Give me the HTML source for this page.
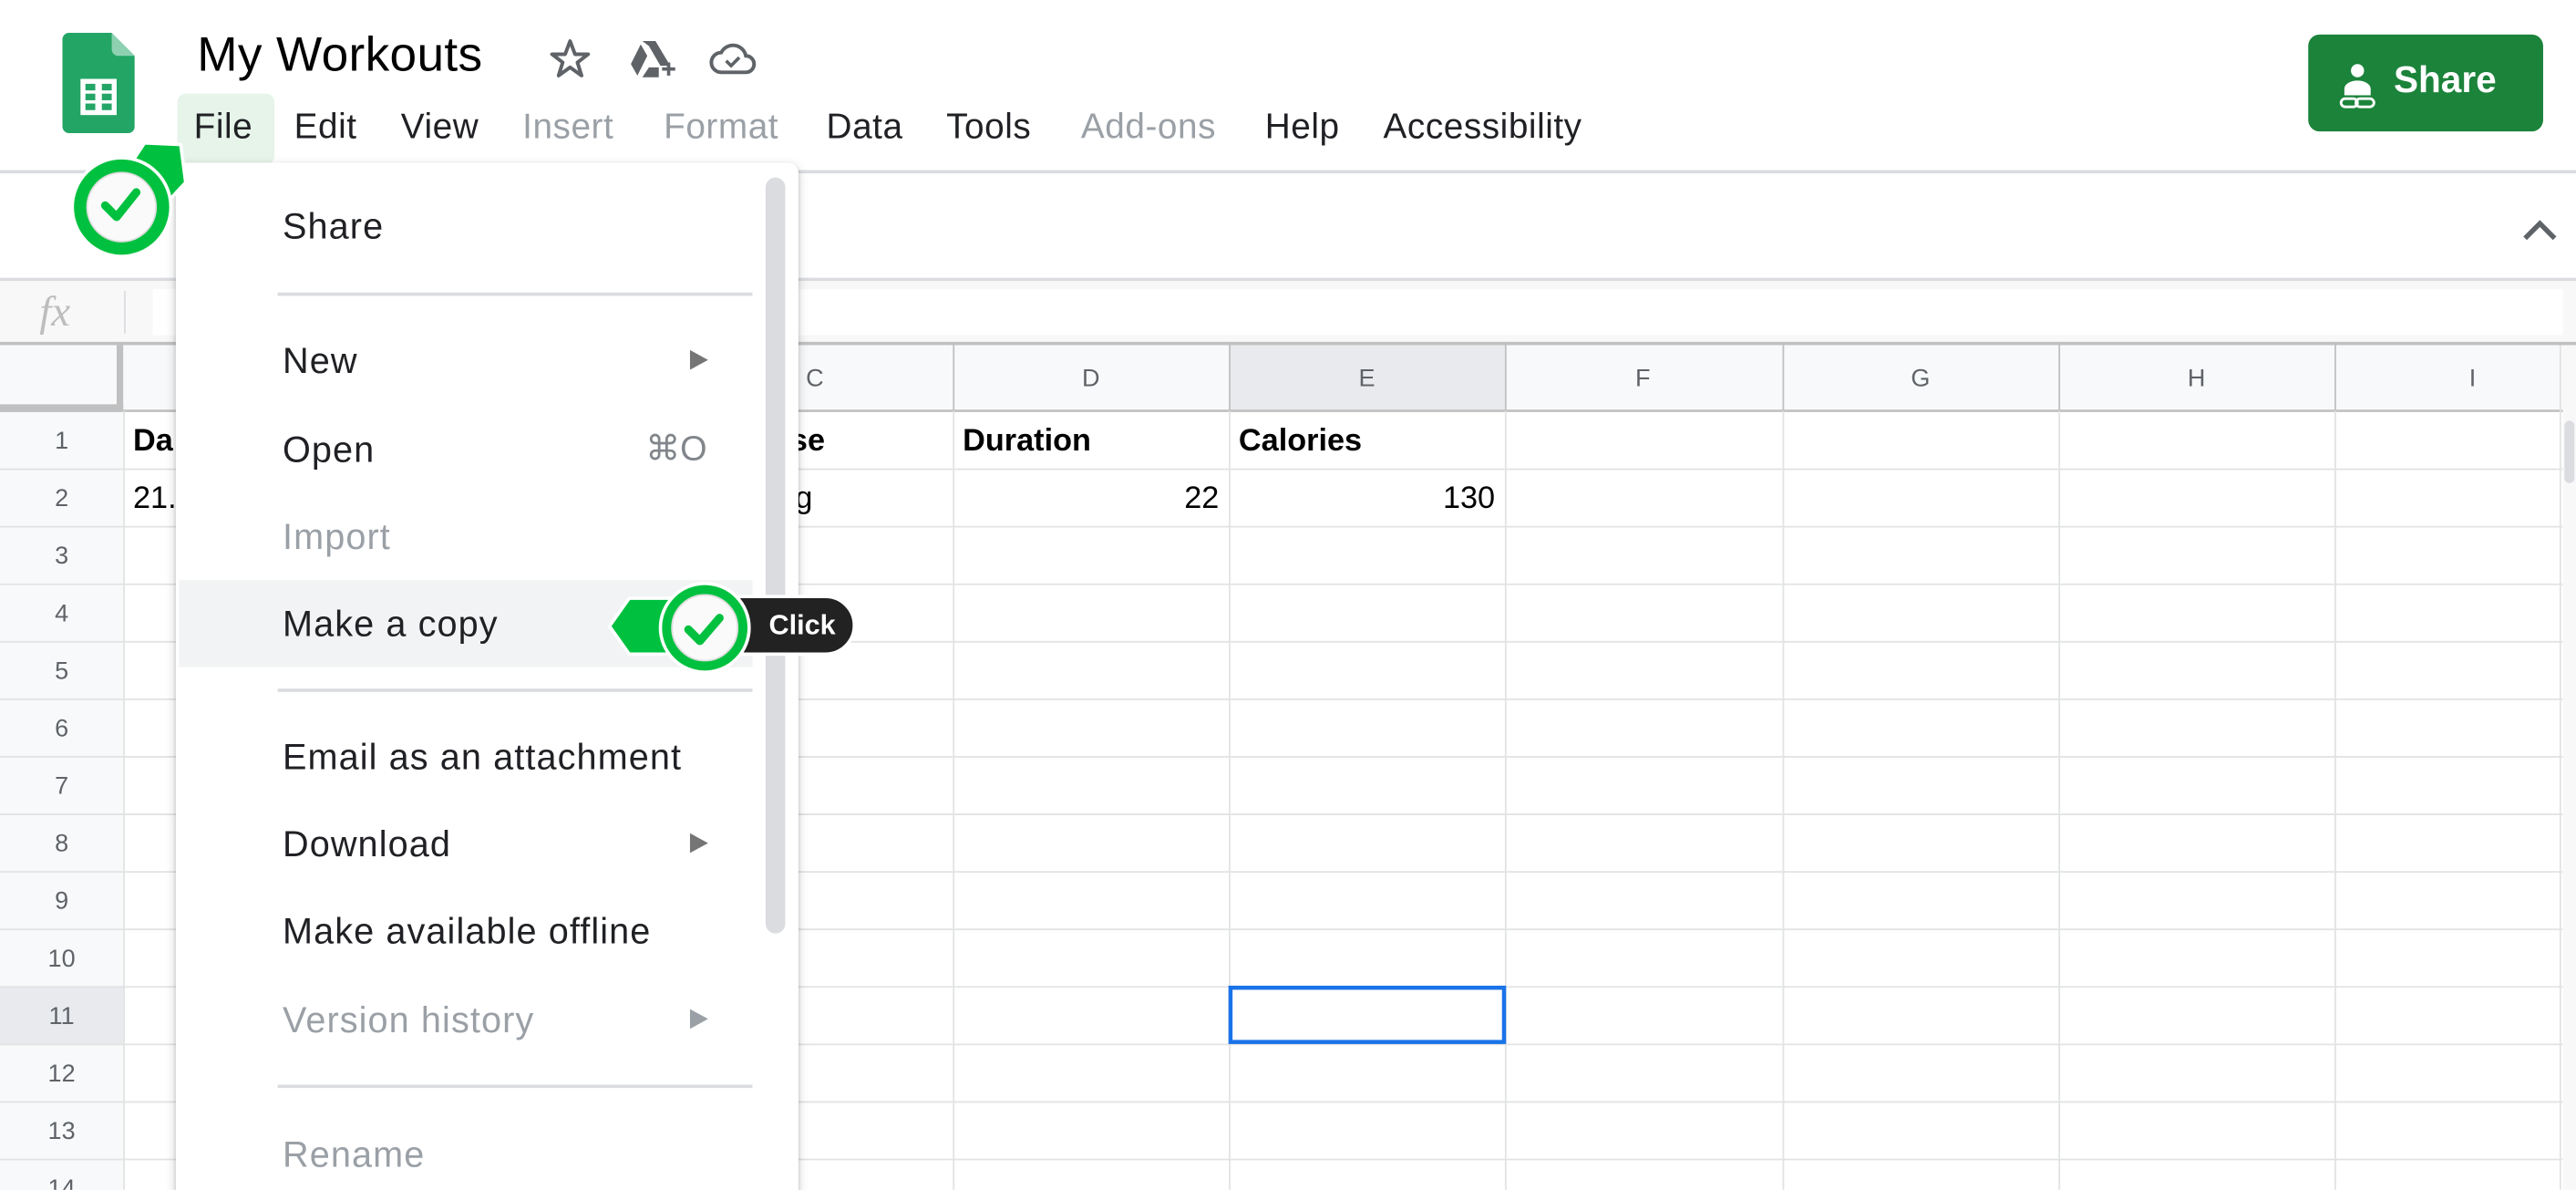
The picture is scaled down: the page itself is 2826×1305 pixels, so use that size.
<!DOCTYPE html>
<html><head><meta charset="utf-8"><style>
html,body{margin:0;padding:0;width:2826px;height:1304px;overflow:hidden;background:#fff;}
#w{position:absolute;left:0;top:0;width:1568px;height:724px;transform:scale(1.80230);transform-origin:0 0;font-family:"Liberation Sans",Arial,sans-serif;color:#202124;overflow:hidden;}
.a{position:absolute;white-space:nowrap;}
.mb{font-size:21.5px;top:65px;letter-spacing:0.3px;}
.mi{font-size:22px;left:172px;letter-spacing:0.6px;}
.g{color:#9aa0a6;}
.ch{font-size:15px;color:#5f6368;width:168px;text-align:center;top:222px;}
.rh{font-size:15px;color:#5f6368;width:75px;text-align:center;}
.tri{position:absolute;width:0;height:0;border-left:11px solid #757575;border-top:6px solid transparent;border-bottom:6px solid transparent;}
</style></head><body><div id="w">
<svg class="a" style="left:0;top:0" width="1568" height="724">
<line x1="0" y1="104.5" x2="1568" y2="104.5" stroke="#dadce0" stroke-width="2"/>
<line x1="0" y1="170" x2="1568" y2="170" stroke="#dadce0" stroke-width="2"/>
<rect x="0" y="171" width="1568" height="38" fill="#f8f8f8"/>
<rect x="93" y="176" width="1467" height="28" fill="#fff"/>
<line x1="76" y1="177" x2="76" y2="203" stroke="#dadce0"/>
<text x="24" y="198" font-family="Liberation Serif,serif" font-style="italic" font-size="26" fill="#bdbdbd">fx</text>
<line x1="0" y1="209" x2="1568" y2="209" stroke="#c0c0c0" stroke-width="2"/>
<rect x="0" y="210" width="1560" height="40" fill="#f8f9fa"/>
<rect x="748" y="210" width="168" height="40" fill="#e8eaed"/>
<rect x="0" y="250" width="75" height="474" fill="#f8f9fa"/>
<rect x="0" y="600" width="75" height="35" fill="#e8eaed"/>
<line x1="0" y1="248" x2="75" y2="248" stroke="#c0c0c0" stroke-width="4"/>
<line x1="73" y1="210" x2="73" y2="250" stroke="#c0c0c0" stroke-width="4"/>
<line x1="0" y1="250" x2="1560" y2="250" stroke="#c0c0c0" stroke-width="1.5"/>
<g stroke="#e2e3e3" stroke-width="1">
<line x1="0" y1="285.5" x2="1560" y2="285.5"/><line x1="0" y1="320.5" x2="1560" y2="320.5"/>
<line x1="0" y1="355.5" x2="1560" y2="355.5"/><line x1="0" y1="390.5" x2="1560" y2="390.5"/>
<line x1="0" y1="425.5" x2="1560" y2="425.5"/><line x1="0" y1="460.5" x2="1560" y2="460.5"/>
<line x1="0" y1="495.5" x2="1560" y2="495.5"/><line x1="0" y1="530.5" x2="1560" y2="530.5"/>
<line x1="0" y1="565.5" x2="1560" y2="565.5"/><line x1="0" y1="600.5" x2="1560" y2="600.5"/>
<line x1="0" y1="635.5" x2="1560" y2="635.5"/><line x1="0" y1="670.5" x2="1560" y2="670.5"/>
<line x1="0" y1="705.5" x2="1560" y2="705.5"/>
<line x1="75.5" y1="250" x2="75.5" y2="724"/>
<line x1="580.5" y1="250" x2="580.5" y2="724"/><line x1="748.5" y1="250" x2="748.5" y2="724"/>
<line x1="916.5" y1="250" x2="916.5" y2="724"/><line x1="1085.5" y1="250" x2="1085.5" y2="724"/>
<line x1="1253.5" y1="250" x2="1253.5" y2="724"/><line x1="1421.5" y1="250" x2="1421.5" y2="724"/>
<line x1="1558.5" y1="210" x2="1558.5" y2="724"/>
</g>
<g stroke="#c0c0c0" stroke-width="1">
<line x1="580.5" y1="210" x2="580.5" y2="250"/><line x1="748.5" y1="210" x2="748.5" y2="250"/>
<line x1="916.5" y1="210" x2="916.5" y2="250"/><line x1="1085.5" y1="210" x2="1085.5" y2="250"/>
<line x1="1253.5" y1="210" x2="1253.5" y2="250"/><line x1="1421.5" y1="210" x2="1421.5" y2="250"/>
</g>
<rect x="1560" y="210" width="8" height="514" fill="#f8f8f8"/>
<rect x="1561" y="256" width="6" height="38" rx="3" fill="#dadce0"/>
<rect x="749" y="601" width="166.5" height="33" fill="none" stroke="#1a73e8" stroke-width="2.5"/>
<path d="M1537 145 L1546 136 L1555 145" fill="none" stroke="#5f6368" stroke-width="3"/>
</svg>
<div class="a ch" style="left:412px">C</div><div class="a ch" style="left:580px">D</div><div class="a ch" style="left:748px">E</div>
<div class="a ch" style="left:916px">F</div><div class="a ch" style="left:1085px">G</div><div class="a ch" style="left:1253px">H</div><div class="a ch" style="left:1421px;width:168px">I</div>
<div class="a rh" style="top:260px">1</div><div class="a rh" style="top:295px">2</div><div class="a rh" style="top:330px">3</div>
<div class="a rh" style="top:365px">4</div><div class="a rh" style="top:400px">5</div><div class="a rh" style="top:435px">6</div>
<div class="a rh" style="top:470px">7</div><div class="a rh" style="top:505px">8</div><div class="a rh" style="top:540px">9</div>
<div class="a rh" style="top:575px">10</div><div class="a rh" style="top:610px">11</div><div class="a rh" style="top:645px">12</div>
<div class="a rh" style="top:680px">13</div><div class="a rh" style="top:715px">14</div>
<div class="a" style="left:81px;top:258px;font-size:19px;font-weight:bold;color:#000">Da</div>
<div class="a" style="left:81px;top:293px;font-size:19px;color:#000">21.</div>
<div class="a" style="left:481px;top:258px;font-size:19px;font-weight:bold;color:#000">se</div>
<div class="a" style="left:484px;top:293px;font-size:19px;color:#000">g</div>
<div class="a" style="left:586px;top:258px;font-size:19px;font-weight:bold;color:#000">Duration</div>
<div class="a" style="left:754px;top:258px;font-size:19px;font-weight:bold;color:#000">Calories</div>
<div class="a" style="left:580px;width:162px;text-align:right;top:293px;font-size:19px;color:#000">22</div>
<div class="a" style="left:748px;width:162px;text-align:right;top:293px;font-size:19px;color:#000">130</div>
<svg class="a" style="left:38px;top:20px" width="44" height="61" viewBox="0 0 44 61">
<path d="M4 0 H30 L44 14 V57 a4 4 0 0 1 -4 4 H4 a4 4 0 0 1 -4 -4 V4 a4 4 0 0 1 4 -4z" fill="#23a566"/>
<path d="M30 0 L44 14 H34 a4 4 0 0 1 -4 -4z" fill="#8ed1b1"/>
<rect x="11" y="28" width="22" height="22" fill="#fff"/>
<g fill="#23a566"><rect x="14" y="31" width="6" height="4"/><rect x="24" y="31" width="6" height="4"/><rect x="14" y="37" width="6" height="4"/><rect x="24" y="37" width="6" height="4"/><rect x="14" y="43" width="6" height="4"/><rect x="24" y="43" width="6" height="4"/></g>
</svg>
<div class="a" style="left:120px;top:17px;font-size:29.5px;color:#000;letter-spacing:0.2px">My Workouts</div>
<svg class="a" style="left:333px;top:22px" width="130" height="28" viewBox="0 0 130 28">
<path d="M14 3 L17 11 H25 L18.5 16 L21 24 L14 19 L7 24 L9.5 16 L3 11 H11z" fill="none" stroke="#5f6368" stroke-width="2.2" stroke-linejoin="round"/>
<path d="M58 3 H66 L75 18 H69 L62 6z M57 5 L61 12 L55 24 L51 17z M62 19 H68 V25 H58z" fill="#5f6368"/>
<path d="M70 20 h8 M74 16 v8" stroke="#5f6368" stroke-width="2"/>
<path d="M106 22 a6 6 0 0 1 0 -12 a8 8 0 0 1 15 2 a5 5 0 0 1 0 10z" fill="none" stroke="#5f6368" stroke-width="2.2"/>
<path d="M109 15 l3 3 l5 -5" fill="none" stroke="#5f6368" stroke-width="2"/>
</svg>
<div class="a" style="left:108px;top:57px;width:59px;height:43px;background:#e6f4ea;border-radius:5px"></div>
<div class="a mb" style="left:118px">File</div>
<div class="a mb" style="left:179px">Edit</div>
<div class="a mb" style="left:244px">View</div>
<div class="a mb g" style="left:318px">Insert</div>
<div class="a mb g" style="left:404px">Format</div>
<div class="a mb" style="left:503px">Data</div>
<div class="a mb" style="left:576px">Tools</div>
<div class="a mb g" style="left:658px">Add-ons</div>
<div class="a mb" style="left:770px">Help</div>
<div class="a mb" style="left:842px">Accessibility</div>
<div class="a" style="left:1405px;top:21px;width:143px;height:59px;background:#1b833a;border-radius:7px"></div>
<svg class="a" style="left:1424px;top:37px" width="24" height="30" viewBox="0 0 24 30">
<circle cx="11" cy="6" r="4" fill="#fff"/><path d="M3 21 V17 a8 5 0 0 1 16 0 V21z" fill="#fff"/>
<rect x="1" y="23" width="10" height="5" rx="2.5" fill="none" stroke="#fff" stroke-width="1.6"/><rect x="10" y="23" width="11" height="5" rx="2.5" fill="none" stroke="#fff" stroke-width="1.6"/>
</svg>
<div class="a" style="left:1457px;top:36px;font-size:22.5px;font-weight:bold;color:#fff">Share</div>
<div class="a" style="left:107px;top:99px;width:379px;height:640px;background:#fff;border-radius:6px;box-shadow:0 2px 6px rgba(60,64,67,.25),0 1px 2px rgba(60,64,67,.2)"></div>
<div class="a" style="left:466px;top:108px;width:12px;height:460px;background:#dadce0;border-radius:6px"></div>
<div class="a" style="left:109px;top:353px;width:349px;height:53px;background:#f1f3f4"></div>
<div class="a" style="left:169px;top:178px;width:289px;height:2px;background:#dadce0"></div>
<div class="a" style="left:169px;top:419px;width:289px;height:2px;background:#dadce0"></div>
<div class="a" style="left:169px;top:660px;width:289px;height:2px;background:#dadce0"></div>
<div class="a mi" style="top:125px">Share</div>
<div class="a mi" style="top:207px">New</div><div class="tri" style="left:420px;top:213px"></div>
<div class="a mi" style="top:261px">Open</div><div class="a" style="left:393px;top:261px;font-size:21px;color:#80868b">⌘O</div>
<div class="a mi g" style="top:314px">Import</div>
<div class="a mi" style="top:367px">Make a copy</div>
<div class="a mi" style="top:448px">Email as an attachment</div>
<div class="a mi" style="top:501px">Download</div><div class="tri" style="left:420px;top:507px"></div>
<div class="a mi" style="top:554px">Make available offline</div>
<div class="a mi g" style="top:608px">Version history</div><div class="tri" style="left:420px;top:614px;border-left-color:#9aa0a6"></div>
<div class="a mi g" style="top:690px">Rename</div>
<svg class="a" style="left:365px;top:345px" width="165" height="72" viewBox="0 0 165 72">
<rect x="64" y="18" width="91" height="35" rx="17.5" fill="#222" stroke="#fff" stroke-width="2"/>
<path d="M6 36 L18 19 H60 V53 H18z" fill="#00c13f" stroke="#fff" stroke-width="2" stroke-linejoin="round"/>
<circle cx="64" cy="37" r="27" fill="#00c13f" stroke="#fff" stroke-width="2"/>
<circle cx="64" cy="37" r="20" fill="#fafafa" stroke="#ddd" stroke-width="1"/>
<path d="M54 38 L61 45 L73 31" fill="none" stroke="#00c13f" stroke-width="5" stroke-linecap="round" stroke-linejoin="round"/>
</svg>
<div class="a" style="left:468px;top:371px;font-size:17px;font-weight:bold;color:#fff">Click</div>
<svg class="a" style="left:38px;top:80px" width="90" height="90" viewBox="0 0 90 90">
<path d="M40 22 L50 7 L72 8 L75 31 L62 45z" fill="#00c13f" stroke="#fff" stroke-width="2" stroke-linejoin="round"/>
<circle cx="36" cy="46" r="30" fill="#00c13f" stroke="#fff" stroke-width="2"/>
<circle cx="36" cy="46" r="21" fill="#fafafa" stroke="#ddd" stroke-width="1"/>
<path d="M26 45 L33 52 L45 37" fill="none" stroke="#00c13f" stroke-width="5" stroke-linecap="round" stroke-linejoin="round"/>
</svg>
</div></body></html>
